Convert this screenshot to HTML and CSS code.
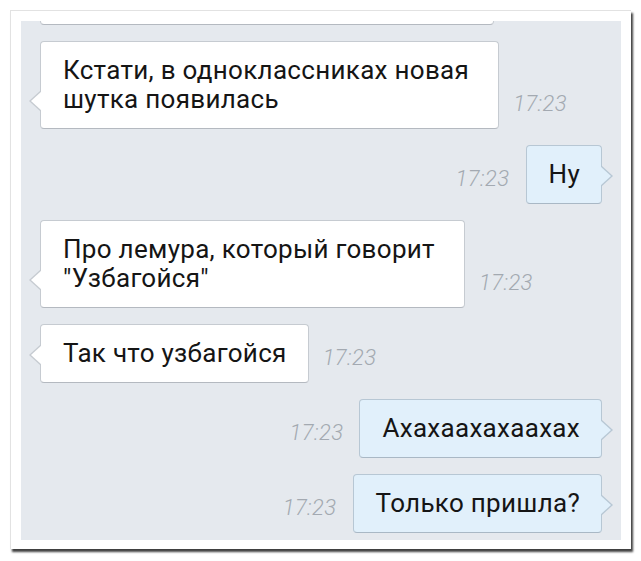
FILE: index.html
```html
<!DOCTYPE html>
<html lang="ru">
<head>
  <meta charset="UTF-8" />
  <meta name="viewport" content="width=device-width, initial-scale=1" />
  <title>Переписка</title>
  <link rel="stylesheet" href="styles.css">
</head>
<body>

  <div class="frame">
    <div class="chat">

      <div class="row in cut">
        <div class="bubble cut-bubble">&nbsp;</div>
      </div>

      <div class="row in">
        <div class="bubble two-lines">Кстати, в одноклассниках новая<br>шутка появилась</div>
        <span class="time">17:23</span>
      </div>

      <div class="row out">
        <span class="time">17:23</span>
        <div class="bubble">Ну</div>
      </div>

      <div class="row in">
        <div class="bubble two-lines">Про лемура, который говорит<br>"Узбагойся"</div>
        <span class="time">17:23</span>
      </div>

      <div class="row in">
        <div class="bubble">Так что узбагойся</div>
        <span class="time">17:23</span>
      </div>

      <div class="row out">
        <span class="time">17:23</span>
        <div class="bubble">Ахахаахахаахах</div>
      </div>

      <div class="row out">
        <span class="time">17:23</span>
        <div class="bubble">Только пришла?</div>
      </div>

    </div>
  </div>

</body>
</html>
```

FILE: styles.css
```css
body {
  margin: 0;
  background: #ffffff;
  font-family: Roboto, "Liberation Sans", sans-serif;
}
.frame {
  margin: 10px;
  width: 600px;
  padding: 10px 10px 9px 10px;
  background: #ffffff;
  border: 1px solid #e2e2e2;
  border-width: 1px 0 0 1px;
  box-shadow: 2px 3px 2px rgba(0, 0, 0, 0.75);
}
.chat {
  height: 519px;
  overflow: hidden;
  background: #e5e9ee;
  padding: 0 19px;
  box-sizing: border-box;
  display: flex;
  flex-direction: column;
  gap: 16px;
}
.row {
  display: flex;
  align-items: flex-end;
}
.row.out {
  justify-content: flex-end;
}
.row.cut {
  margin-top: -55px;
}
.bubble {
  position: relative;
  padding: 14px 21px 14px 22px;
  font-size: 26px;
  letter-spacing: 0.3px;
  line-height: 29px;
  color: #151515;
  background: #ffffff;
  border: 1px solid #c6cbd1;
  border-bottom-color: #b4b9c0;
  border-radius: 4px;
}
.bubble.two-lines {
  padding-right: 29px;
}
.cut-bubble {
  width: 409px;
}
.bubble::before,
.bubble::after {
  content: "";
  position: absolute;
  bottom: 17px;
  width: 0;
  height: 0;
  border-top: 10px solid transparent;
  border-bottom: 10px solid transparent;
}
.in .bubble::before {
  left: -12px;
  border-right: 11px solid #c6cbd1;
}
.in .bubble::after {
  left: -10px;
  border-right: 11px solid #ffffff;
}
.out .bubble {
  background: #e1f0fb;
  border-color: #b7c7d4;
  border-bottom-color: #a9b8c5;
}
.out .bubble::before {
  right: -12px;
  border-left: 11px solid #b7c7d4;
}
.out .bubble::after {
  right: -10px;
  border-left: 11px solid #e1f0fb;
}
.time {
  font-size: 22px;
  font-style: italic;
  font-weight: 300;
  letter-spacing: 0.4px;
  line-height: 22px;
  color: #a3a9b1;
  margin-bottom: 14px;
}
.in .time {
  margin-left: 14px;
}
.out .time {
  margin-right: 16px;
}
```
